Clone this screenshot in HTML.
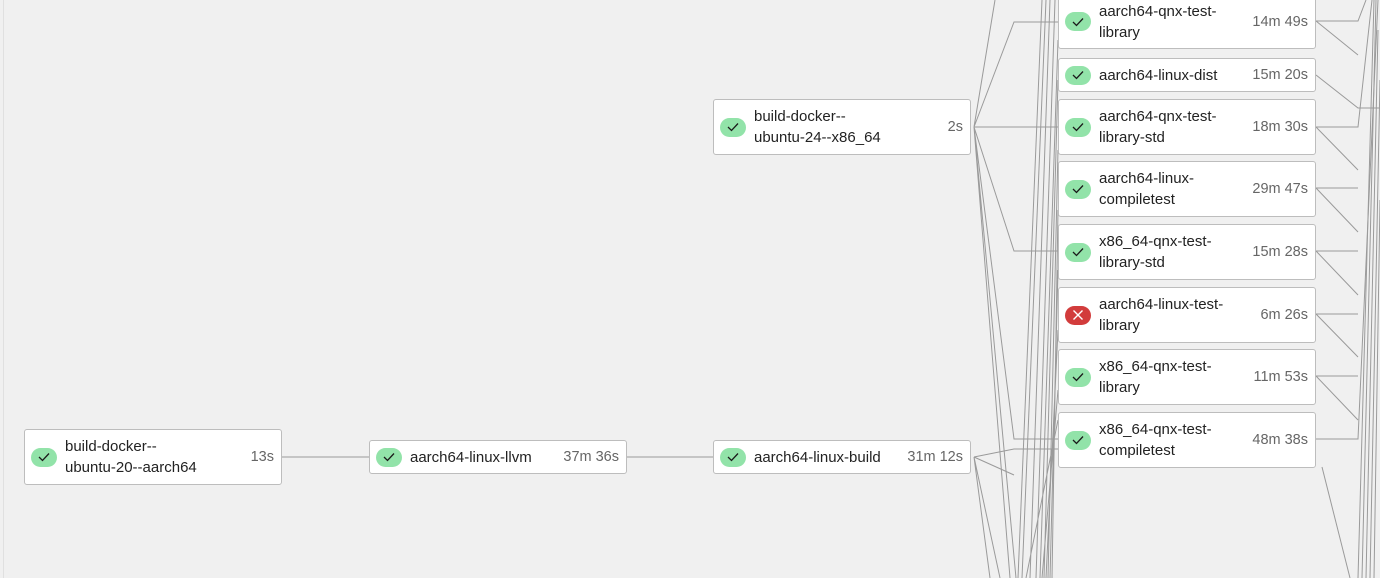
<!DOCTYPE html>
<html><head><meta charset="utf-8"><style>
body{margin:0;width:1380px;height:578px;overflow:hidden;background:#f0f0f0;font-family:"Liberation Sans",sans-serif;position:relative}
.edge{position:absolute;left:3px;top:0;width:1px;height:578px;background:#e0e0e0}
svg{position:absolute;left:0;top:0}
.b{position:absolute;background:#fff;border:1px solid #bdbdbd;border-radius:3px;box-sizing:border-box;display:flex;align-items:center;font-size:15px;color:#222}
.i{width:26px;height:19px;border-radius:10px;background:#92e3a9;margin:0 8px 0 6px;flex:none;display:flex;align-items:center;justify-content:center}
.r{background:#d23c3c}
.t{flex:1;line-height:21px}
.d{color:#666;margin-right:7px;white-space:nowrap;font-size:14.5px}
</style></head><body>
<div class="edge"></div>
<svg width="1380" height="578" stroke="#9a9a9a" stroke-width="1" fill="none">
<path d="M282 457H369M627 457H713"/>
<path d="M974 127L995 0M974 127L1014 22H1058M974 127H1058M974 127L1014 251H1058M974 127L1014 439H1058M974 127L1010 578M974 127L1016 578"/>
<path d="M974 457L1014 449H1058M974 457L1014 475M974 457L990 578M974 457L1000 578"/>
<path d="M1050 0L1030 578M1055 0L1036 578M1046 0L1022 578M1058 40L1040 578M1058 80L1044 578M1058 150L1048 578M1058 210L1052 578M1058 270L1050 578M1058 330L1046 578M1058 390L1042 578M1058 420L1026 578M1042 0L1018 578"/>
<path d="M1316 21H1358L1366 0M1316 21L1358 55M1316 75L1358 108H1380M1316 127H1358L1372 0M1316 127L1358 170M1316 188H1358M1316 188L1358 232M1316 251H1358M1316 251L1358 295M1316 314H1358M1316 314L1358 357M1316 376H1358M1316 376L1358 420M1316 439H1358L1378 0M1322 467L1350 578"/>
<path d="M1362 578L1376 0M1366 578L1378 30M1370 578L1380 80M1374 578L1380 200M1358 578L1374 0"/>
</svg>
<div class="b" style="left:24px;top:429px;width:258px;height:56px"><span class="i"><svg width="12" height="10" style="position:static"><path d="M1 5l3.5 3.5L11 1.5" stroke="#1a1a1a" stroke-width="1.3" fill="none"/></svg></span><span class="t">build-docker--<br>ubuntu-20--aarch64</span><span class="d">13s</span></div>
<div class="b" style="left:369px;top:440px;width:258px;height:34px"><span class="i"><svg width="12" height="10" style="position:static"><path d="M1 5l3.5 3.5L11 1.5" stroke="#1a1a1a" stroke-width="1.3" fill="none"/></svg></span><span class="t">aarch64-linux-llvm</span><span class="d">37m 36s</span></div>
<div class="b" style="left:713px;top:440px;width:258px;height:34px"><span class="i"><svg width="12" height="10" style="position:static"><path d="M1 5l3.5 3.5L11 1.5" stroke="#1a1a1a" stroke-width="1.3" fill="none"/></svg></span><span class="t">aarch64-linux-build</span><span class="d">31m 12s</span></div>
<div class="b" style="left:713px;top:99px;width:258px;height:56px"><span class="i"><svg width="12" height="10" style="position:static"><path d="M1 5l3.5 3.5L11 1.5" stroke="#1a1a1a" stroke-width="1.3" fill="none"/></svg></span><span class="t">build-docker--<br>ubuntu-24--x86_64</span><span class="d">2s</span></div>
<div class="b" style="left:1058px;top:-6px;width:258px;height:55px"><span class="i"><svg width="12" height="10" style="position:static"><path d="M1 5l3.5 3.5L11 1.5" stroke="#1a1a1a" stroke-width="1.3" fill="none"/></svg></span><span class="t">aarch64-qnx-test-<br>library</span><span class="d">14m 49s</span></div>
<div class="b" style="left:1058px;top:58px;width:258px;height:34px"><span class="i"><svg width="12" height="10" style="position:static"><path d="M1 5l3.5 3.5L11 1.5" stroke="#1a1a1a" stroke-width="1.3" fill="none"/></svg></span><span class="t">aarch64-linux-dist</span><span class="d">15m 20s</span></div>
<div class="b" style="left:1058px;top:99px;width:258px;height:56px"><span class="i"><svg width="12" height="10" style="position:static"><path d="M1 5l3.5 3.5L11 1.5" stroke="#1a1a1a" stroke-width="1.3" fill="none"/></svg></span><span class="t">aarch64-qnx-test-<br>library-std</span><span class="d">18m 30s</span></div>
<div class="b" style="left:1058px;top:161px;width:258px;height:56px"><span class="i"><svg width="12" height="10" style="position:static"><path d="M1 5l3.5 3.5L11 1.5" stroke="#1a1a1a" stroke-width="1.3" fill="none"/></svg></span><span class="t">aarch64-linux-<br>compiletest</span><span class="d">29m 47s</span></div>
<div class="b" style="left:1058px;top:224px;width:258px;height:56px"><span class="i"><svg width="12" height="10" style="position:static"><path d="M1 5l3.5 3.5L11 1.5" stroke="#1a1a1a" stroke-width="1.3" fill="none"/></svg></span><span class="t">x86_64-qnx-test-<br>library-std</span><span class="d">15m 28s</span></div>
<div class="b" style="left:1058px;top:287px;width:258px;height:56px"><span class="i r"><svg width="12" height="12" style="position:static"><path d="M1.5 1.5l9 9M10.5 1.5l-9 9" stroke="#fff" stroke-width="1.4"/></svg></span><span class="t">aarch64-linux-test-<br>library</span><span class="d">6m 26s</span></div>
<div class="b" style="left:1058px;top:349px;width:258px;height:56px"><span class="i"><svg width="12" height="10" style="position:static"><path d="M1 5l3.5 3.5L11 1.5" stroke="#1a1a1a" stroke-width="1.3" fill="none"/></svg></span><span class="t">x86_64-qnx-test-<br>library</span><span class="d">11m 53s</span></div>
<div class="b" style="left:1058px;top:412px;width:258px;height:56px"><span class="i"><svg width="12" height="10" style="position:static"><path d="M1 5l3.5 3.5L11 1.5" stroke="#1a1a1a" stroke-width="1.3" fill="none"/></svg></span><span class="t">x86_64-qnx-test-<br>compiletest</span><span class="d">48m 38s</span></div>
</body></html>
